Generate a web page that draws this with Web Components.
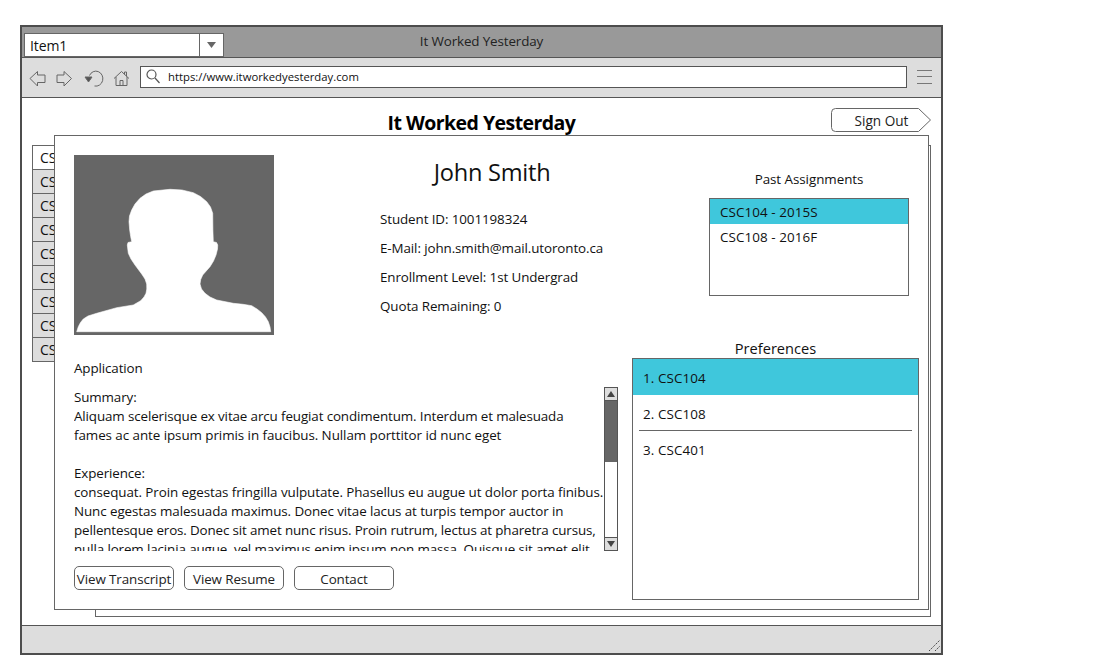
<!DOCTYPE html>
<html><head><meta charset="utf-8"><title>It Worked Yesterday</title>
<style>
html,body{margin:0;padding:0;background:#fff;overflow:hidden}
body{width:1100px;height:655px;padding:25px 0 0 20px;box-sizing:border-box;font-family:"Open Sans","Noto Sans",sans-serif;font-size:13.4px;color:#111;letter-spacing:-.12px}
</style></head><body>
<wf-window title-text="It Worked Yesterday" url="https://www.itworkedyesterday.com">
  <wf-header>It Worked Yesterday</wf-header>
  <wf-backdrop></wf-backdrop>
  <student-modal>
    <span slot="name">John Smith</span>
    <info-line>Student ID: 1001198324</info-line>
    <info-line>E-Mail: john.smith@mail.utoronto.ca</info-line>
    <info-line>Enrollment Level: 1st Undergrad</info-line>
    <info-line>Quota Remaining: 0</info-line>
  </student-modal>
</wf-window>
<script>
const def=(n,html)=>{customElements.define(n,class extends HTMLElement{constructor(){super();this.attachShadow({mode:'open'}).innerHTML=typeof html==='function'?html(this):html;}})};

def('wf-combo',`<style>:host{display:flex;width:200px;height:24px;box-sizing:border-box;border:1px solid #666;background:#fff;font-size:14px}
.v{flex:1;padding-left:5px;line-height:24px;border-right:1px solid #666}.b{width:23px;display:flex;align-items:center;justify-content:center}</style>
<div class="v"><slot></slot></div><div class="b"><svg width="9" height="6"><path d="M0 0H9L4.500 6Z" fill="#666"/></svg></div>`);

def('wf-icon',h=>{const ic={
back:'<path d="M2 8.500 9.500 1.500V5H17V12.500H9.500V16Z"/>',
fwd:'<path d="M15.500 8.500 8 1.500V5H1V12.500H8V16Z"/>',
undo:'<path d="M5.500 5.500A7 7.500 0 1 1 10.500 16"/><path d="M1 7H8L4.500 12Z" fill="#555"/>',
home:'<path d="M2 8.500 9.500 1.500 17 8.500M4 7V15.500H15V7M12.500 4.500V2H14.500V6.500M8 15.500V10.500H11V15.500"/>'};
return `<style>:host{display:block;width:18px;height:18px}svg{display:block;overflow:visible;fill:none;stroke:#666;stroke-width:1}</style><svg width="18" height="18" viewBox="0 0 18 18">${ic[h.getAttribute('name')]}</svg>`});

def('wf-url',`<style>:host{display:flex;align-items:center;height:22px;box-sizing:border-box;flex:1;border:1px solid #555;background:#fff;font-size:11.3px;letter-spacing:0;gap:8px;padding:0 0 1px 5px}svg{display:block;fill:none;stroke:#555;stroke-width:1.2}</style>
<svg width="14" height="15" viewBox="0 0 14 15"><circle cx="5.500" cy="5.500" r="4.500"/><path d="M9 9l4.500 5"/></svg><span><slot></slot></span>`);

def('wf-toolbar',`<style>:host{display:flex;align-items:center;height:40px;box-sizing:border-box;background:#ddd;border-bottom:1px solid #555;padding:0 9px 1px 6px}
.icons{display:flex;gap:10px;margin-right:10px;padding-top:4px}
.m{width:15px;height:12px;margin-left:10px;border-top:1px solid #777;border-bottom:1px solid #777;position:relative}.m i{position:absolute;left:0;right:0;top:5px;height:1px;background:#777}
</style><div class="icons"><wf-icon name="back"></wf-icon><wf-icon name="fwd"></wf-icon><wf-icon name="undo"></wf-icon><wf-icon name="home"></wf-icon></div><slot></slot><div class="m"><i></i></div>`);

def('wf-titlebar',`<style>:host{display:grid;grid-template-columns:1fr auto 1fr;height:31px;box-sizing:border-box;background:#999;border-bottom:1px solid #555;padding:6px 2px 0}
.t{font-size:13.4px;line-height:19px;margin-top:-1px;color:#222}</style><div><slot name="combo"></slot></div><div class="t"><slot></slot></div><div></div>`);

def('wf-window',h=>`<style>:host{display:flex;flex-direction:column;width:923px;height:630px;box-sizing:border-box;border:2px solid #4d4d4d;background:#fff}
.c{flex:1;position:relative;min-height:0}.s{height:28px;box-sizing:border-box;background:#ddd;border-top:1px solid #555;display:flex;justify-content:flex-end;align-items:flex-end}svg{display:block;fill:none;stroke:#444;stroke-width:1;stroke-dasharray:1.500 1}</style>
<wf-titlebar><wf-combo slot="combo">Item1</wf-combo>${h.getAttribute('title-text')}</wf-titlebar>
<wf-toolbar><wf-url>${h.getAttribute('url')}</wf-url></wf-toolbar>
<div class="c"><slot></slot></div>
<div class="s"><svg width="14" height="14"><path d="M2 12 13 1M8 12 13 7"/></svg></div>`);

def('wf-signout',`<style>:host{display:block;position:relative;width:100px;height:24px;font-size:13.6px;letter-spacing:0;text-align:center;line-height:25px;color:#222}
svg{position:absolute;inset:0;fill:#fff;stroke:#666}span{position:relative;padding-left:1px}</style>
<svg width="100" height="24"><path d="M4.500.5H87.500L99.500 12 87.500 23.500H4.500Q.5 23.500.5 19.500V4.500Q.5.5 4.500.5Z"/></svg><span><slot></slot></span>`);

def('wf-header',`<style>:host{display:grid;grid-template-columns:1fr auto 1fr;height:47px;box-sizing:border-box;padding:10px 10px 0}
h1{margin:3px 0 0;font-size:19.5px;line-height:24px;font-weight:700;letter-spacing:-.55px;color:#000}.r{display:flex;justify-content:flex-end}</style>
<div></div><h1><slot></slot></h1><div class="r"><wf-signout>Sign Out</wf-signout></div>`);

def('wf-row',`<style>:host{display:block;height:24px;box-sizing:border-box;border-bottom:1px solid #666;background:#ddd;padding-left:7px;font-size:14px;line-height:23px;overflow:hidden}:host([first]){background:#fff}</style><slot></slot>`);

def('wf-backdrop',`<style>:host{display:flex;padding-left:10px;align-items:flex-start}.l{width:64px;box-sizing:border-box;border:1px solid #666;border-bottom:0;border-right:0}.card{width:836px;height:472px;box-sizing:border-box;border:1px solid #666;background:#fff;margin-left:-1px}</style>
<div class="l"><wf-row first>CS</wf-row><wf-row>CS</wf-row><wf-row>CS</wf-row><wf-row>CS</wf-row><wf-row>CS</wf-row><wf-row>CS</wf-row><wf-row>CS</wf-row><wf-row>CS</wf-row><wf-row>CS</wf-row></div><div class="card"></div>`);

def('info-line',`<style>:host{display:block;line-height:29px;white-space:nowrap;letter-spacing:-.1px}</style><slot></slot>`);

def('wf-photo',`<style>:host{display:block;width:200px;height:180px;background:#666;flex:none}svg{display:block}</style>
<svg width="200" height="180" viewBox="0 0 200 180"><path fill="#fff" stroke="#fff" stroke-width=".6" stroke-linejoin="round" d="M96 34.300 79.300 36 72 39 66 43.300 61 49 57.700 55 55.500 61 55 66.700 55.700 75 56.700 81.700 57.700 86.700 54 87.500 53.300 90 54.300 98.300 57 104 61 110 67.700 119 71 124 72.700 129 72.800 134 72 138.300 70 142 66.700 145.700 59.300 150 42.700 152.700 22.700 158.300 14 161 9.300 164 6.500 167.500 4.300 171.700 2.700 176.700H196.700L196 172 194.300 166.700 191.500 162 187.700 157.700 183 154 177.700 150.700 169 149.300 159.300 148.300 142.700 145 136 142 131 138.300 127.500 134 126 129 126.700 124.500 128.700 120 136 111.700 139.500 106 142 100 143.500 94 143.700 90 142.500 87.500 139.300 86.700 138.900 75 138.700 58.300 136.500 52 132.700 46.700 126.500 41.500 119.300 37.700 108 35Z"/></svg>`);

def('wf-list',`<style>:host{display:block;box-sizing:border-box;border:1px solid #666;background:#fff}</style><slot></slot>`);
def('past-item',`<style>:host{display:block;height:25px;box-sizing:border-box;padding:1px 0 0 10px;line-height:25px;font-size:13.4px;letter-spacing:.1px}:host([sel]){background:#3fc7dc}</style><slot></slot>`);
def('pref-item',`<style>:host{display:block;height:36px;padding:0 6px;box-sizing:border-box}:host([sel]){background:#3fc7dc}
div{height:36px;box-sizing:border-box;line-height:38px;padding-left:4px;letter-spacing:.1px}:host([line]) div{border-bottom:1px solid #666}</style><div><slot></slot></div>`);

def('wf-scrollbar',`<style>:host{display:flex;flex-direction:column;width:14px;height:164px;box-sizing:border-box;border:1px solid #555;background:#fff;flex:none}
.b{height:12px;background:#ddd;display:flex;align-items:center;justify-content:center;flex:none}.u{border-bottom:1px solid #555}.d{border-top:1px solid #555;margin-top:auto}
.th{height:61px;background:#666}svg{display:block;fill:#444}</style>
<div class="b u"><svg width="8" height="6"><path d="M4 0 8 6H0Z"/></svg></div><div class="th"></div><div class="b d"><svg width="8" height="6"><path d="M0 0H8L4 6Z"/></svg></div>`);

def('wf-btn',`<style>:host{display:block;width:100px;height:24px;box-sizing:border-box;border:1px solid #666;border-radius:5px;background:#fff;text-align:center;line-height:25px;font-size:13.4px;letter-spacing:-.1px;white-space:nowrap;color:#222}</style><slot></slot>`);

def('student-modal',`<style>
:host{position:absolute;left:32px;top:37px;width:875px;height:475px;box-sizing:border-box;border:1px solid #666;background:#fff;padding:19px 9px 9px 19px;display:flex;flex-direction:column}
.top{display:flex;height:185px}
.info{width:224px;margin-left:106px;flex:none}
.name{font-size:23.6px;line-height:35px;height:36px;text-align:center;margin-bottom:14px;letter-spacing:-.25px;color:#111}
.past{width:200px;margin-left:105px;flex:none;padding-top:14px}
.pl{text-align:center;line-height:20px;margin-bottom:9px;letter-spacing:-.05px}
.bot{display:flex;height:260px;gap:14px}
.left{width:544px;flex:none}
.app{padding-top:19px;line-height:19px;margin-bottom:9px}
.tr{display:flex;gap:1px;align-items:flex-start}
.txt{width:529px;height:163px;overflow:hidden;line-height:19px;white-space:nowrap;margin-top:1px}
.txt span{display:block;height:19px}
.btns{display:flex;gap:10px;margin-top:15px}
.right{flex:1}
.prl{text-align:center;font-size:14.6px;line-height:16px;height:18px;letter-spacing:0}
</style>
<div class="top"><wf-photo></wf-photo>
<div class="info"><div class="name"><slot name="name"></slot></div><slot></slot></div>
<div class="past"><div class="pl">Past Assignments</div><wf-list style="height:98px"><past-item sel>CSC104 - 2015S</past-item><past-item>CSC108 - 2016F</past-item></wf-list></div></div>
<div class="bot"><div class="left"><div class="app">Application</div>
<div class="tr"><div class="txt"><span>Summary:</span><span>Aliquam scelerisque ex vitae arcu feugiat condimentum. Interdum et malesuada</span><span style="letter-spacing:-.06px">fames ac ante ipsum primis in faucibus. Nullam porttitor id nunc eget</span><span></span><span>Experience:</span><span style="letter-spacing:-.075px">consequat. Proin egestas fringilla vulputate. Phasellus eu augue ut dolor porta finibus.</span><span style="letter-spacing:-.09px">Nunc egestas malesuada maximus. Donec vitae lacus at turpis tempor auctor in</span><span style="letter-spacing:-.14px">pellentesque eros. Donec sit amet nunc risus. Proin rutrum, lectus at pharetra cursus,</span><span>nulla lorem lacinia augue, vel maximus enim ipsum non massa. Quisque sit amet elit</span></div><wf-scrollbar></wf-scrollbar></div>
<div class="btns"><wf-btn>View Transcript</wf-btn><wf-btn>View Resume</wf-btn><wf-btn>Contact</wf-btn></div></div>
<div class="right"><div class="prl">Preferences</div><wf-list style="height:242px"><pref-item sel>1. CSC104</pref-item><pref-item line>2. CSC108</pref-item><pref-item>3. CSC401</pref-item></wf-list></div></div>`);
</script>
</body></html>
